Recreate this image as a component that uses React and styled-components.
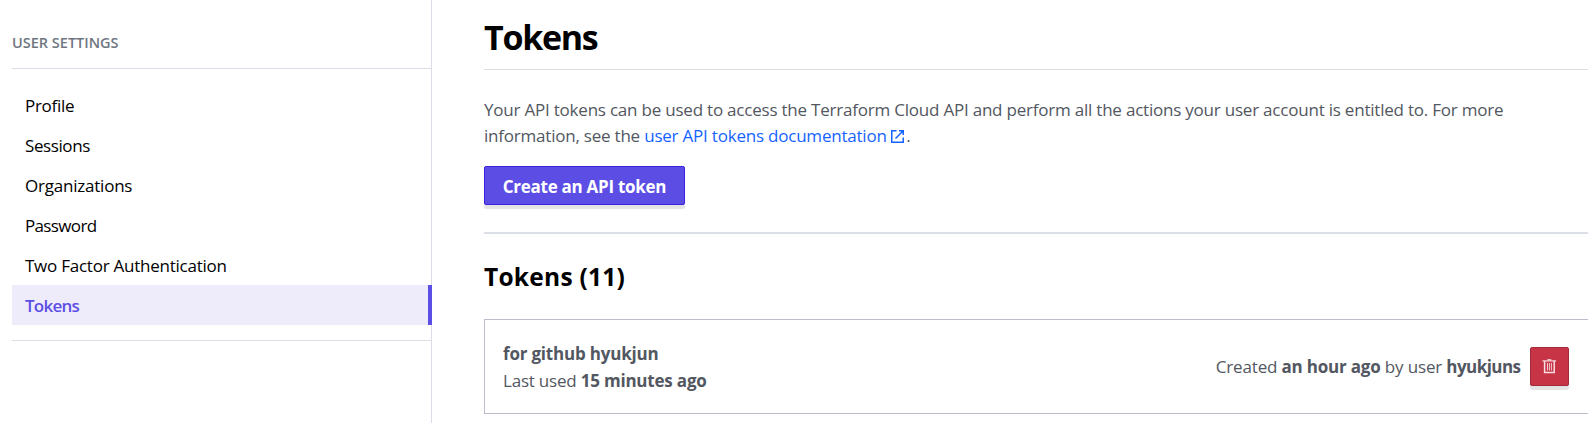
import React from 'react';
import styled, { createGlobalStyle } from 'styled-components';

const GlobalStyle = createGlobalStyle`
  *, *::before, *::after { box-sizing: border-box; }
  body {
    margin: 0;
    background: #fff;
    color: #000;
    font-family: "Open Sans", "Noto Sans", sans-serif;
    font-size: 17px;
    letter-spacing: -0.215px;
    overflow: hidden;
  }
`;

const Page = styled.div`
  display: flex;
  height: 423px;
  overflow: hidden;
`;

const Sidebar = styled.aside`
  flex: none;
  width: 432px;
  padding-left: 12px;
  border-right: 1px solid #dbdde6;
`;

const SidebarTitle = styled.div`
  height: 69px;
  padding-top: 32px;
  border-bottom: 1px solid #dbdde6;
  color: #6f7682;
  font-size: 14.5px;
  font-weight: 600;
  line-height: 22px;
  letter-spacing: 0;
`;

const Nav = styled.nav`
  display: flex;
  flex-direction: column;
  padding: 16px 0 15px;
  border-bottom: 1px solid #dcdee6;
`;

const NavItem = styled.a`
  height: 40px;
  margin-right: ${(p) => (p.$active ? '-1px' : '0')};
  padding-left: 13px;
  line-height: 41px;
  color: ${(p) => (p.$active ? '#5c4ee5' : '#000')};
  font-weight: ${(p) => (p.$active ? 600 : 400)};
  letter-spacing: ${(p) => p.$tracking}px;
  background: ${(p) => (p.$active ? '#eeecfa' : 'transparent')};
  border-right: ${(p) => (p.$active ? '4px solid #5c4ee5' : '0')};
`;

const Main = styled.main`
  flex: 1;
  min-width: 0;
  padding-left: 52px;
`;

const PageTitle = styled.h1`
  height: 70px;
  margin: 0;
  padding-top: 13px;
  border-bottom: 1px solid #dbdde2;
  font-size: 34px;
  font-weight: 700;
  line-height: 48px;
  letter-spacing: -1.3px;
`;

const Intro = styled.p`
  width: 1060px;
  margin: 27px 0 17px;
  color: #525761;
  line-height: 26px;
  white-space: nowrap;
`;

const DocLink = styled.a`
  color: #1563ff;
`;

const LinkIcon = styled.svg`
  width: 13px;
  height: 13px;
  margin: 0 2px 0 4.5px;
  vertical-align: -1px;
`;

const Button = styled.button`
  display: flex;
  align-items: center;
  justify-content: center;
  flex: none;
  width: ${(p) => (p.$danger ? 39 : 201)}px;
  height: 39px;
  padding: ${(p) => (p.$danger ? 0 : '2px')} 0 0;
  border: 1px solid ${(p) => (p.$danger ? '#a32a3a' : '#3a23dc')};
  border-radius: 2px;
  background: ${(p) => (p.$danger ? '#c73445' : '#5c4ee5')};
  box-shadow: 0 4px 1px rgba(0, 0, 0, 0.11);
  color: #fff;
  font: inherit;
  font-weight: 700;
  letter-spacing: -0.28px;
`;

const Divider = styled.hr`
  height: 2px;
  margin: 27px 0 0;
  border: 0;
  background: #dce0e6;
`;

const SectionTitle = styled.h2`
  margin: 26px 0 25px;
  font-size: 24.5px;
  font-weight: 700;
  line-height: 34px;
  letter-spacing: 0.25px;
`;

const TokenCard = styled.section`
  display: flex;
  align-items: center;
  justify-content: space-between;
  height: 95px;
  padding: 0 19px 0 18px;
  border: 1px solid #babdcb;
  border-right: 0;
  color: #525761;
`;

const TokenInfo = styled.div`
  line-height: 27px;
  padding-top: 1px;
`;

const TokenMeta = styled.div`
  display: flex;
  align-items: center;
  gap: 9.5px;
  letter-spacing: -0.16px;
`;

const Strong = styled.strong`
  font-weight: 700;
  letter-spacing: ${(p) => p.$tracking ?? -0.2}px;
`;

const TrashIcon = styled.svg`
  width: 15px;
  height: 15px;
`;

const navItems = [
  { label: 'Profile', tracking: -0.3 },
  { label: 'Sessions', tracking: -0.4 },
  { label: 'Organizations', tracking: -0.22 },
  { label: 'Password', tracking: -0.65 },
  { label: 'Two Factor Authentication', tracking: -0.24 },
  { label: 'Tokens', tracking: -0.75, active: true },
];

function ExternalLink() {
  return (
    <LinkIcon viewBox="0 0 13 13" fill="none" stroke="currentColor" strokeWidth="1.5">
      <path d="M5.5 .75H.75v11.5h11.5V7.5" />
      <path d="M8 .75h4.25V5M12 1 4.5 8.5" />
    </LinkIcon>
  );
}

function Trash() {
  return (
    <TrashIcon viewBox="0 0 15 15" fill="none" stroke="#f8dfe3">
      <path d="M.5 1.9h13.6" strokeWidth="1.2" />
      <path d="M5.3 .8h4" strokeWidth="1.2" />
      <path d="M2.6 2v11.6h9.6V2" strokeWidth="1.5" />
      <path d="M5.5 4v7.5M7.4 4v7.5M9.4 4v7.5" strokeWidth=".9" />
    </TrashIcon>
  );
}

export default function App() {
  return (
    <Page>
      <GlobalStyle />
      <Sidebar>
        <SidebarTitle>USER SETTINGS</SidebarTitle>
        <Nav>
          {navItems.map((item) => (
            <NavItem key={item.label} $active={item.active} $tracking={item.tracking}>
              {item.label}
            </NavItem>
          ))}
        </Nav>
      </Sidebar>
      <Main>
        <PageTitle>Tokens</PageTitle>
        <Intro>
          Your API tokens can be used to access the Terraform Cloud API and perform all the actions
          your user account is entitled to. For more
          <br />
          information, see the{' '}
          <DocLink>
            user API tokens documentation
            <ExternalLink />
          </DocLink>
          .
        </Intro>
        <Button>Create an API token</Button>
        <Divider />
        <SectionTitle>Tokens (11)</SectionTitle>
        <TokenCard>
          <TokenInfo>
            <Strong>for github hyukjun</Strong>
            <br />
            Last used <Strong>15 minutes ago</Strong>
          </TokenInfo>
          <TokenMeta>
            <span>
              Created <Strong>an hour ago</Strong> by user <Strong $tracking={-0.55}>hyukjuns</Strong>
            </span>
            <Button $danger aria-label="Delete token">
              <Trash />
            </Button>
          </TokenMeta>
        </TokenCard>
      </Main>
    </Page>
  );
}
